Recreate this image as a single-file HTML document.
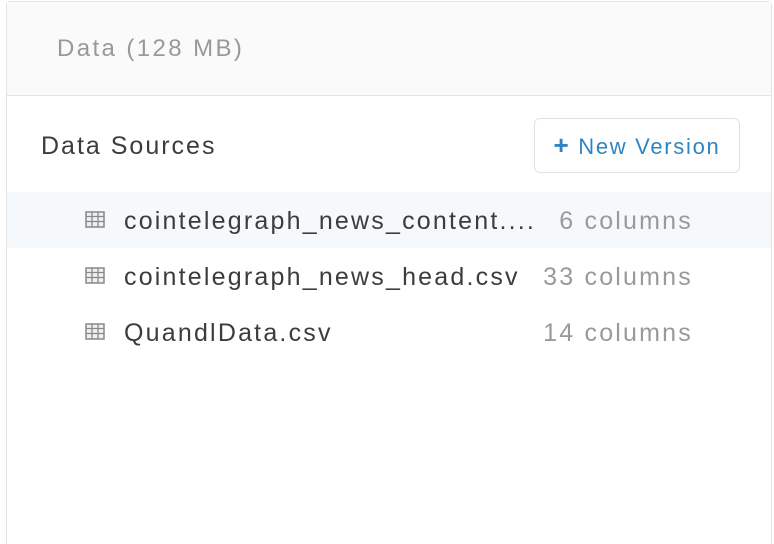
<!DOCTYPE html>
<html><head><style>
html,body{margin:0;width:774px;height:544px;overflow:hidden}
body{background:#fff;font-family:"Liberation Sans",sans-serif;position:relative}
.panel{position:absolute;left:6px;top:1px;width:764px;height:560px;border:1px solid #e2e2e2;border-radius:4px 4px 0 0}
.hdr{position:absolute;left:0;top:0;right:0;height:93px;background:#fafafa;border-bottom:1px solid #e4e4e4}
.hdr span{position:absolute;left:50px;top:33px;font-size:24px;color:#999;letter-spacing:2.4px}
.title{position:absolute;left:34px;top:130px;font-size:25px;color:#3c3c3c;letter-spacing:2px}
.btn{position:absolute;left:527px;top:116px;width:204px;height:53px;border:1px solid #e0e0e0;border-radius:6px;color:#2f85c1;font-size:22px;line-height:53px;text-align:center;letter-spacing:1.7px}
.row{position:absolute;left:0;right:0;height:56px}
.row.hl{background:#f5f9fc}
.ic{position:absolute;left:78px;top:19px}
.nm{position:absolute;left:117px;top:15px;font-size:25px;color:#3c3c3c;letter-spacing:2.2px}
.ct{position:absolute;right:78px;top:15px;font-size:25px;color:#9a9a9a;letter-spacing:2.2px}
</style></head><body>
<div class="panel">
<div class="hdr"><span>Data (128 MB)</span></div>
<div class="title">Data Sources</div>
<div class="btn"><b style="font-size:26px">+</b> New Version</div>
<div class="row hl" style="top:190px">
<svg class="ic" width="20" height="17"><rect x="1" y="1" width="18" height="15" fill="#f0f0f0" stroke="#888" stroke-width="1.5"/><path d="M1 5.5H19M1 10.5H19M7 1V16M13 1V16" stroke="#888" stroke-width="1.3"/></svg>
<span class="nm">cointelegraph_news_content....</span><span class="ct">6 columns</span></div>
<div class="row" style="top:246px">
<svg class="ic" width="20" height="17"><rect x="1" y="1" width="18" height="15" fill="#f0f0f0" stroke="#888" stroke-width="1.5"/><path d="M1 5.5H19M1 10.5H19M7 1V16M13 1V16" stroke="#888" stroke-width="1.3"/></svg>
<span class="nm">cointelegraph_news_head.csv</span><span class="ct">33 columns</span></div>
<div class="row" style="top:302px">
<svg class="ic" width="20" height="17"><rect x="1" y="1" width="18" height="15" fill="#f0f0f0" stroke="#888" stroke-width="1.5"/><path d="M1 5.5H19M1 10.5H19M7 1V16M13 1V16" stroke="#888" stroke-width="1.3"/></svg>
<span class="nm">QuandlData.csv</span><span class="ct">14 columns</span></div>
</div>
</body></html>
